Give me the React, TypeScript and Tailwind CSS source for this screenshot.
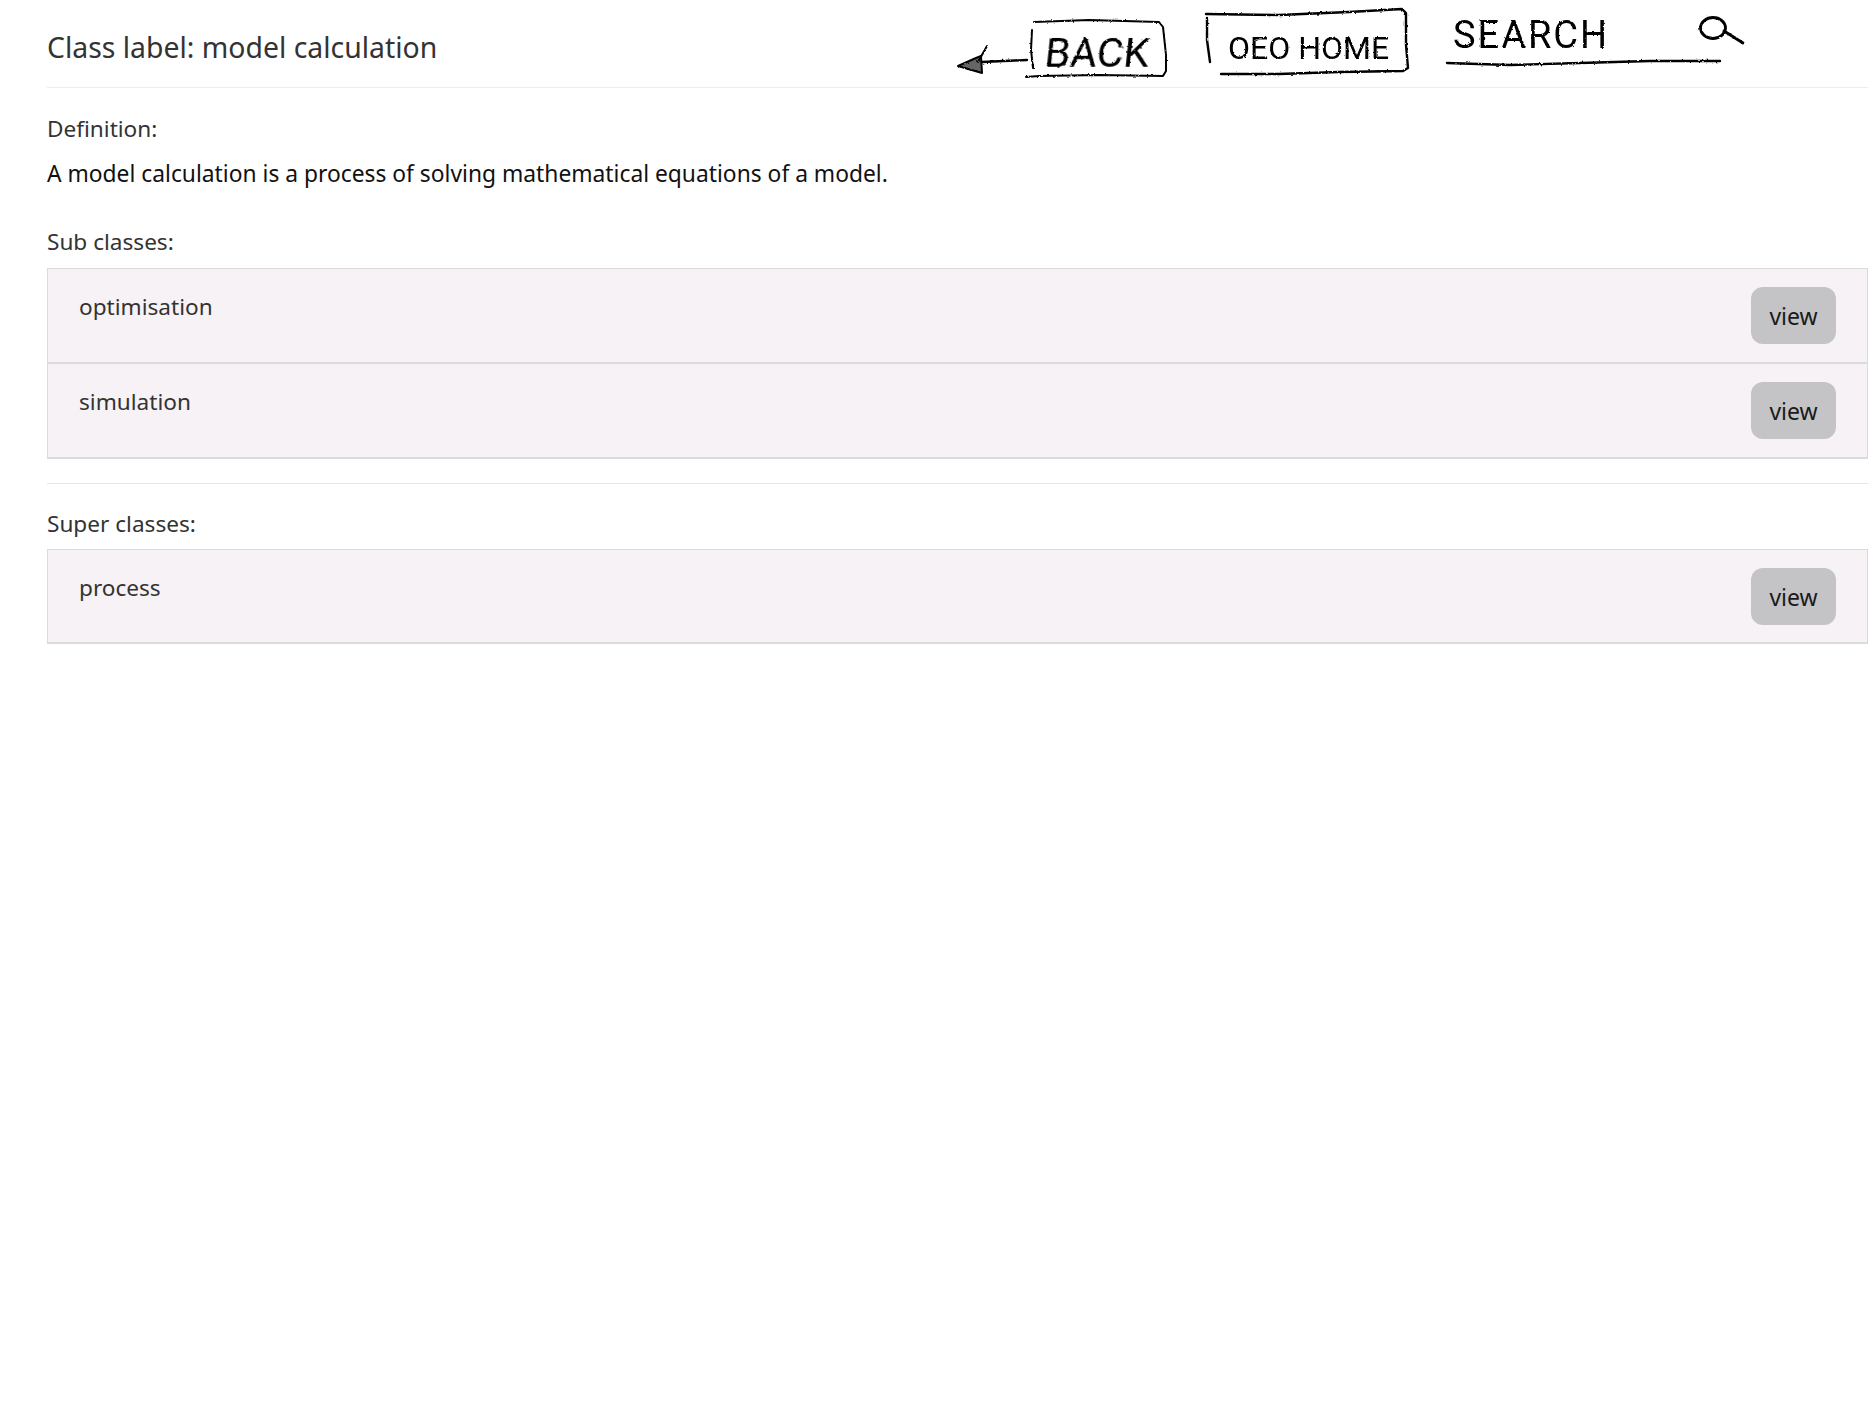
const sans = "font-['Noto_Sans','Open_Sans',sans-serif]";
const scribble = "absolute whitespace-nowrap font-['Roboto',sans-serif] font-normal text-black [filter:url(#rough)]";

function BackSketch() {
  return (
    <div className="relative h-[84px] w-[216px]">
      <svg className="absolute inset-0" width="216" height="84" viewBox="954 0 216 84" fill="none" stroke="#000" strokeLinecap="round" strokeLinejoin="round" filter="url(#rough)">
        <path d="M959 66 L977 58 L982 56 L983 73 Z" fill="#000" fillOpacity="0.6" strokeWidth="2" />
        <path d="M988 46 L979 62" strokeWidth="2" />
        <path d="M983 62 L1028 60" strokeWidth="2.4" />
        <path d="M1033 30 L1032 50 L1034 68" strokeWidth="2" />
        <path d="M1035 22 L1090 20 L1160 22 L1164 27 L1167 55 L1167 71 L1164 76 L1100 75 L1040 76 L1027 77" strokeWidth="2" />
      </svg>
      <span className={`${scribble} left-[92px] top-[30px] text-[41px] leading-[46px] -skew-x-6`}>BACK</span>
    </div>
  );
}

function HomeSketch() {
  return (
    <div className="relative h-[84px] w-[207px]">
      <svg className="absolute inset-0" width="207" height="84" viewBox="1204 0 207 84" fill="none" stroke="#000" strokeLinecap="round" strokeLinejoin="round" filter="url(#rough)">
        <path d="M1208 18 L1208 40 L1211 62" strokeWidth="2.4" />
        <path d="M1207 14 L1280 15 L1350 12 L1403 9 L1407 13 L1407 45 L1409 68 L1404 71 L1340 72 L1280 74 L1222 74" strokeWidth="2.4" />
      </svg>
      <span className={`${scribble} left-[25px] top-[29px] text-[32px] leading-[38px]`}>OEO HOME</span>
    </div>
  );
}

function SearchSketch() {
  return (
    <div className="relative h-[84px] w-[306px]">
      <svg className="absolute inset-0" width="306" height="84" viewBox="1444 0 306 84" fill="none" stroke="#000" strokeLinecap="round" strokeLinejoin="round" filter="url(#rough)">
        <path d="M1447 63 L1510 65 L1580 63 L1650 61 L1720 61" strokeWidth="2.4" />
        <ellipse cx="1713" cy="28" rx="12.5" ry="10.5" strokeWidth="2.8" />
        <path d="M1724 31 L1743 43" strokeWidth="3" />
      </svg>
      <span className={`${scribble} left-[9px] top-[14px] text-[38px] leading-[42px] tracking-[2px]`}>SEARCH</span>
    </div>
  );
}

function ClassItem({ name, short }: { name: string; short?: boolean }) {
  return (
    <div className={`flex items-start justify-between border-x border-b-2 border-[#dcdadc] bg-[#f6f2f6] px-[31px] pt-[18px] ${short ? "pb-[17px]" : "pb-[18px]"}`}>
      <span className="pt-[1px] text-[22.6px] leading-[38px] text-[#333]">{name}</span>
      <button className="h-[57px] w-[85px] rounded-[12px] bg-[#c4c3c5] pt-[2px] text-[23px] text-[#1a1a1a]">view</button>
    </div>
  );
}

export default function App() {
  return (
    <div className={`min-h-[1403px] bg-white ${sans}`}>
      <svg width="0" height="0" className="absolute">
        <filter id="rough" x="-5%" y="-5%" width="110%" height="110%">
          <feTurbulence type="fractalNoise" baseFrequency="0.35" numOctaves="2" seed="4" />
          <feDisplacementMap in="SourceGraphic" scale="2.5" />
        </filter>
      </svg>
      <div className="pl-[47px] pr-[3px]">
        <header className="flex h-[88px] items-start justify-between border-b border-[#eeebee]">
          <h1 className="pt-[25px] text-[28.4px] leading-[45px] text-[#333]">Class label: model calculation</h1>
          <div className="mr-[118px] flex gap-[34px]">
            <BackSketch />
            <HomeSketch />
            <SearchSketch />
          </div>
        </header>

        <p className="mt-[25px] text-[22.6px] leading-[32px] text-[#333]">Definition:</p>
        <p className="mt-[12px] text-[22.8px] leading-[34px] text-[#111]">A model calculation is a process of solving mathematical equations of a model.</p>

        <p className="mt-[35px] text-[22.6px] leading-[32px] text-[#333]">Sub classes:</p>
        <div className="mt-[10px] border-t border-[#dcdadc]">
          <ClassItem name="optimisation" />
          <ClassItem name="simulation" />
        </div>

        <div className="mt-[24px] border-t border-[#e8e6e8]" />

        <p className="mt-[24px] text-[22.6px] leading-[32px] text-[#333]">Super classes:</p>
        <div className="mt-[9px] border-t border-[#dcdadc]">
          <ClassItem name="process" short />
        </div>
      </div>
    </div>
  );
}
